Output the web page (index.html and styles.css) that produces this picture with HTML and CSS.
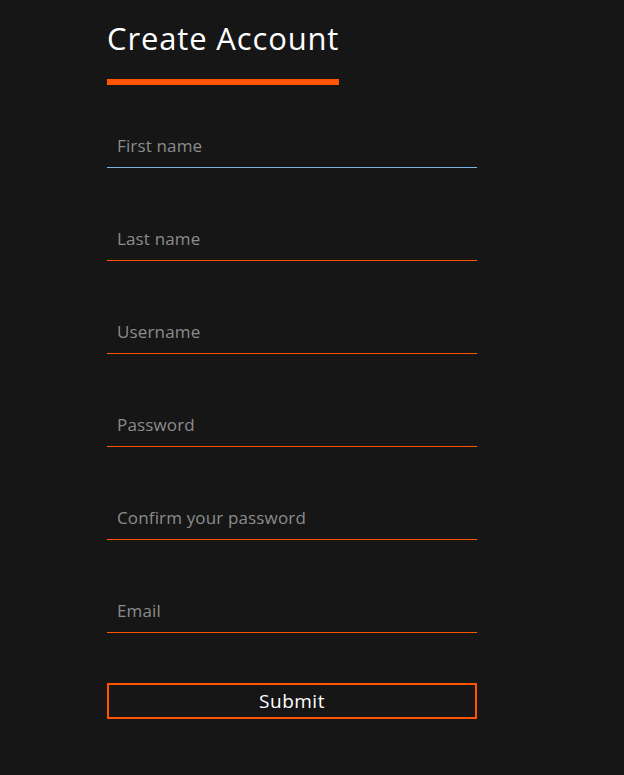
FILE: index.html
```html
<!DOCTYPE html>
<html lang="en">
<head>
<meta charset="utf-8">
<title>Create Account</title>
<link rel="stylesheet" href="styles.css">
</head>
<body>
<main class="page">
  <form class="signup">
    <h1 class="title">Create Account</h1>
    <div class="title-bar"></div>
    <div class="fields">
      <div class="field line-blue"><input class="input" type="text" placeholder="First name"></div>
      <div class="field line-orange"><input class="input" type="text" placeholder="Last name"></div>
      <div class="field line-orange"><input class="input" type="text" placeholder="Username"></div>
      <div class="field line-orange"><input class="input" type="password" placeholder="Password"></div>
      <div class="field line-orange"><input class="input" type="password" placeholder="Confirm your password"></div>
      <div class="field line-orange"><input class="input" type="email" placeholder="Email"></div>
    </div>
    <button class="submit" type="button">Submit</button>
  </form>
</main>
</body>
</html>
```

FILE: styles.css
```css
html, body {
  margin: 0;
  padding: 0;
  background: #161616;
  height: 100%;
}
body {
  font-family: "Open Sans", "DejaVu Sans", sans-serif;
  color: #ffffff;
}
.page {
  padding: 18px 0 0 107px;
}
.signup {
  width: 370px;
  display: flex;
  flex-direction: column;
}
.title {
  margin: 0;
  font-size: 31px;
  font-weight: 400;
  line-height: 40px;
  color: #ffffff;
  letter-spacing: 0.85px;
}
.title-bar {
  margin-top: 21px;
  width: 232px;
  height: 6px;
  background: #ff5500;
}
.fields {
  margin-top: 41px;
  display: flex;
  flex-direction: column;
  gap: 51px;
}
.field {
  box-sizing: border-box;
  height: 42px;
  width: 100%;
  display: flex;
}
.line-blue {
  border-bottom: 1px solid #7db3e3;
}
.line-orange {
  border-bottom: 1px solid #ff5500;
}
.input {
  flex: 1;
  min-width: 0;
  margin: 0;
  padding: 0 0 3px 10px;
  border: 0;
  background: transparent;
  color: #dddddd;
  font-family: "Open Sans", "DejaVu Sans", sans-serif;
  font-size: 17px;
  letter-spacing: 0.15px;
  outline: none;
}
.input::placeholder {
  color: #8c8c8c;
  opacity: 1;
}
.submit {
  box-sizing: border-box;
  height: 36px;
  width: 100%;
  margin: 50px 0 0;
  border: 2px solid #ff5500;
  background: transparent;
  color: #ffffff;
  font-family: "Open Sans", "DejaVu Sans", sans-serif;
  font-size: 19px;
  letter-spacing: 0.5px;
  cursor: pointer;
}
```
